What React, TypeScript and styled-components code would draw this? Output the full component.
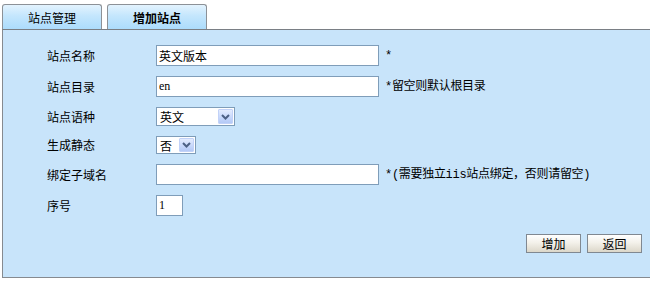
import * as React from 'react';
import styled, { createGlobalStyle } from 'styled-components';

const GlobalStyle = createGlobalStyle`
  html, body {
    margin: 0;
    padding: 0;
    background: #fff;
  }
  body {
    font-family: "Noto Sans CJK SC", "Liberation Sans", sans-serif;
    font-size: 12px;
    color: #000;
  }
`;

const StyledPage = styled.div`
  width: 650px;
  height: 283px;
  padding-top: 4px;
  box-sizing: border-box;
`;

const StyledTabs = styled.div`
  display: flex;
  gap: 5px;
  padding-left: 2px;
  height: 25px;
`;

const StyledTab = styled.div<{ $active?: boolean }>`
  display: flex;
  align-items: center;
  justify-content: center;
  box-sizing: border-box;
  width: 100px;
  height: 25px;
  border: 1px solid #8c9197;
  border-bottom: none;
  border-radius: 3px 3px 0 0;
  background: linear-gradient(to bottom, #e3f3fe 0%, #c4e6fd 45%, #acdcfc 100%);
  font-weight: ${(p) => (p.$active ? 'bold' : 'normal')};
  line-height: 1;
  padding-top: 1px;
  cursor: pointer;
`;

const StyledPanel = styled.div`
  box-sizing: border-box;
  margin-left: 2px;
  width: 648px;
  height: 249px;
  border-top: 1px solid #7a7f85;
  border-left: 1px solid #868a8f;
  border-bottom: 1px solid #868a8f;
  background: #c8e4fa;
  padding: 15px 8px 0 44px;
`;

const StyledForm = styled.div`
  display: grid;
  grid-template-columns: 109px 1fr;
  row-gap: 10px;
  align-items: center;
`;

const StyledLabel = styled.div`
  line-height: 14px;
`;

const StyledField = styled.div`
  display: flex;
  align-items: center;
  gap: 6px;
  white-space: nowrap;
`;

const StyledInput = styled.input<{ $width: number }>`
  box-sizing: border-box;
  width: ${(p) => p.$width}px;
  height: 21px;
  border: 1px solid #7f9db9;
  background: #fff;
  padding: 0 2px;
  margin: 0;
  font-family: "Liberation Serif", "Noto Sans CJK SC", serif;
  font-size: 12px;
  color: #000;
  outline: none;
`;

const StyledSelectWrap = styled.div<{ $width: number; $height: number }>`
  position: relative;
  box-sizing: border-box;
  width: ${(p) => p.$width}px;
  height: ${(p) => p.$height}px;
  border: 1px solid #7f9db9;
  background: #fff;
`;

const StyledSelect = styled.select`
  appearance: none;
  -webkit-appearance: none;
  box-sizing: border-box;
  width: 100%;
  height: 100%;
  border: none;
  background: transparent;
  padding: 0 0 0 3px;
  margin: 0;
  font-family: "Noto Sans CJK SC", sans-serif;
  font-size: 12px;
  color: #000;
  outline: none;
`;

const StyledArrow = styled.span`
  position: absolute;
  top: 1px;
  right: 1px;
  bottom: 1px;
  width: 15px;
  box-sizing: border-box;
  border: 1px solid #c2d2f8;
  border-radius: 1px;
  background: linear-gradient(to bottom, #e4ecfe 0%, #c6d7fb 60%, #b4c9f6 100%);
  display: flex;
  align-items: center;
  justify-content: center;
  pointer-events: none;
`;

const StyledNote = styled.span`
  line-height: 14px;
  font-family: "Liberation Mono", "Noto Sans CJK SC", monospace;
  letter-spacing: -0.3px;
`;

const StyledActions = styled.div`
  display: flex;
  justify-content: flex-end;
  gap: 6px;
  margin-top: 18px;
`;

const StyledButton = styled.button`
  box-sizing: border-box;
  width: 55px;
  height: 19px;
  border: 1px solid #808891;
  background: linear-gradient(to bottom, #ffffff 0%, #f3f1ea 45%, #dcd7c9 100%);
  font-family: "Noto Sans CJK SC", sans-serif;
  font-size: 12px;
  color: #000;
  padding: 0;
  line-height: 1;
  cursor: pointer;
`;

const Chevron = () => (
  <svg width="9" height="6" viewBox="0 0 9 6">
    <path d="M1 1 L4.5 4.5 L8 1" fill="none" stroke="#4d6185" strokeWidth="2" />
  </svg>
);

interface SelectProps {
  width: number;
  height: number;
  value: string;
  options: string[];
}

const Select: React.FC<SelectProps> = ({ width, height, value, options }) => (
  <StyledSelectWrap $width={width} $height={height}>
    <StyledSelect defaultValue={value}>
      {options.map((o) => (
        <option key={o}>{o}</option>
      ))}
    </StyledSelect>
    <StyledArrow>
      <Chevron />
    </StyledArrow>
  </StyledSelectWrap>
);

export default function App() {
  return (
    <StyledPage>
      <GlobalStyle />
      <StyledTabs>
        <StyledTab>站点管理</StyledTab>
        <StyledTab $active>增加站点</StyledTab>
      </StyledTabs>
      <StyledPanel>
        <StyledForm>
          <StyledLabel>站点名称</StyledLabel>
          <StyledField>
            <StyledInput $width={223} defaultValue="英文版本" />
            <StyledNote>*</StyledNote>
          </StyledField>

          <StyledLabel>站点目录</StyledLabel>
          <StyledField>
            <StyledInput $width={223} defaultValue="en" />
            <StyledNote>*留空则默认根目录</StyledNote>
          </StyledField>

          <StyledLabel>站点语种</StyledLabel>
          <StyledField>
            <Select width={79} height={19} value="英文" options={['英文', '中文']} />
          </StyledField>

          <StyledLabel>生成静态</StyledLabel>
          <StyledField>
            <Select width={40} height={18} value="否" options={['否', '是']} />
          </StyledField>

          <StyledLabel>绑定子域名</StyledLabel>
          <StyledField>
            <StyledInput $width={223} />
            <StyledNote>*(需要独立iis站点绑定，否则请留空)</StyledNote>
          </StyledField>

          <StyledLabel>序号</StyledLabel>
          <StyledField>
            <StyledInput $width={27} defaultValue="1" />
          </StyledField>
        </StyledForm>
        <StyledActions>
          <StyledButton>增加</StyledButton>
          <StyledButton>返回</StyledButton>
        </StyledActions>
      </StyledPanel>
    </StyledPage>
  );
}
